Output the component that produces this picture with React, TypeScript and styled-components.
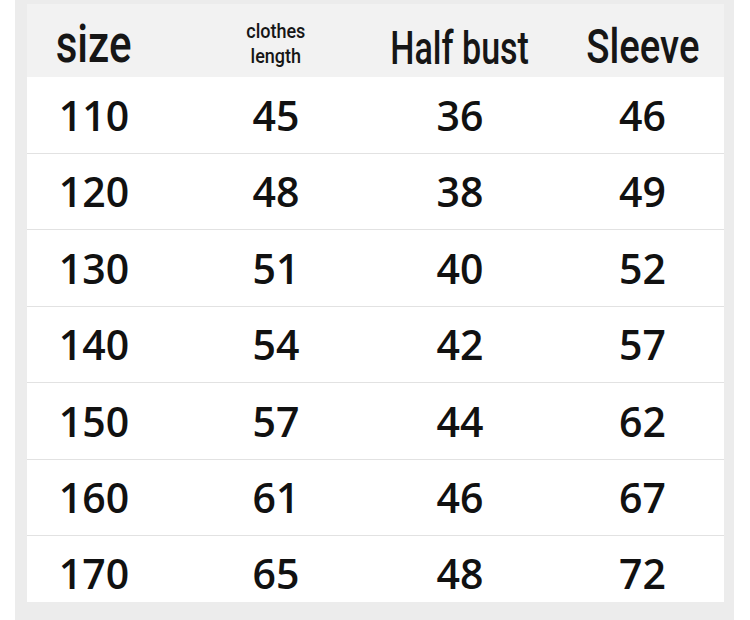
import React from 'react';
import styled, { createGlobalStyle } from 'styled-components';

const GlobalStyle = createGlobalStyle`
  html, body {
    margin: 0;
    padding: 0;
    background: #ffffff;
  }
`;

const Page = styled.div`
  width: 750px;
  height: 620px;
  padding: 0 16px 0 15px;
  box-sizing: border-box;
  background: #ffffff;
`;

const Panel = styled.div`
  height: 100%;
  box-sizing: border-box;
  padding: 4px 10px 18px 12px;
  background: #ececec;
`;

const Table = styled.div`
  display: grid;
  grid-template-columns: 134px 230px 138px 1fr;
  grid-template-rows: 73px repeat(6, 76.5px) 66px;
  background: #ffffff;
`;

const HeadCell = styled.div<{ $shift?: number }>`
  display: flex;
  align-items: flex-end;
  justify-content: center;
  padding-left: ${(p) => p.$shift ?? 0}px;
  padding-bottom: 6px;
  background: #f2f2f2;
  color: #161616;
  font-family: Roboto, 'Liberation Sans', sans-serif;
  font-weight: 500;
`;

const Squeezed = styled.span<{ $size: number; $squeeze: number }>`
  display: inline-block;
  font-size: ${(p) => p.$size}px;
  line-height: 1;
  white-space: nowrap;
  transform: scaleX(${(p) => p.$squeeze});
  transform-origin: center bottom;
`;

const SmallHead = styled.span`
  display: inline-block;
  margin-bottom: 2px;
  font-size: 20px;
  line-height: 25px;
  text-align: center;
  transform: scaleX(0.9);
  transform-origin: center bottom;
`;

const Cell = styled.div<{ $shift?: number; $last?: boolean }>`
  display: flex;
  align-items: center;
  justify-content: center;
  padding-left: ${(p) => p.$shift ?? 0}px;
  padding-top: ${(p) => (p.$last ? 8 : 0)}px;
  border-bottom: ${(p) => (p.$last ? 'none' : '1.5px solid #e2e2e2')};
  box-sizing: border-box;
  color: #111111;
  font-family: 'Open Sans', 'Liberation Sans', sans-serif;
  font-weight: 600;
  font-size: 41px;
`;

const rows = [
  ['110', '45', '36', '46'],
  ['120', '48', '38', '49'],
  ['130', '51', '40', '52'],
  ['140', '54', '42', '57'],
  ['150', '57', '44', '62'],
  ['160', '61', '46', '67'],
  ['170', '65', '48', '72'],
];

const shifts = [0, 0, 0, 32];

const App: React.FC = () => {
  return (
    <>
      <GlobalStyle />
      <Page>
        <Panel>
          <Table>
            <HeadCell>
              <Squeezed $size={54} $squeeze={0.78}>size</Squeezed>
            </HeadCell>
            <HeadCell>
              <SmallHead>
                clothes
                <br />
                length
              </SmallHead>
            </HeadCell>
            <HeadCell>
              <Squeezed $size={46} $squeeze={0.74}>Half bust</Squeezed>
            </HeadCell>
            <HeadCell $shift={shifts[3]}>
              <Squeezed $size={48} $squeeze={0.8}>Sleeve</Squeezed>
            </HeadCell>

            {rows.map((row, i) =>
              row.map((value, j) => (
                <Cell key={`${i}-${j}`} $shift={shifts[j]} $last={i === rows.length - 1}>
                  {value}
                </Cell>
              ))
            )}
          </Table>
        </Panel>
      </Page>
    </>
  );
};

export default App;
